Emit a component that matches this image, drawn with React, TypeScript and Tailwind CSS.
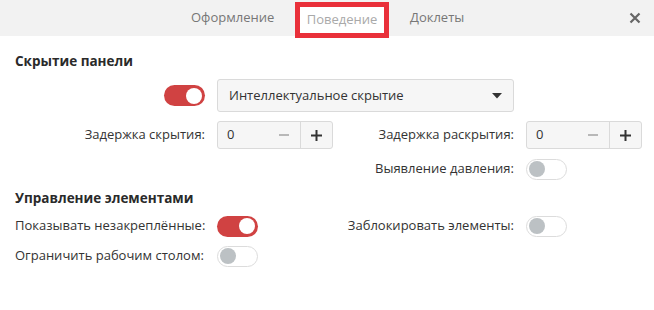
import React from "react";

const font = { fontFamily: '"Open Sans", "Noto Sans", sans-serif' };

function Toggle({ on }: { on: boolean }) {
  return on ? (
    <div className="w-[41px] h-[21px] rounded-full bg-[#d04242] flex items-center justify-end pr-[3px]">
      <div className="w-[16px] h-[16px] rounded-full bg-white" />
    </div>
  ) : (
    <div className="w-[41px] h-[21px] rounded-full bg-white border border-[#dcdcdc] flex items-center justify-start pl-[2px]">
      <div className="w-[16px] h-[16px] rounded-full bg-[#bcc1c4]" />
    </div>
  );
}

function Spin() {
  return (
    <div className="w-[116px] h-[28px] rounded-[3px] border border-[#dadada] bg-[#f6f6f6] flex items-stretch text-[13px] text-[#333]">
      <div className="flex-1 flex items-center pl-[9px]">0</div>
      <div className="w-[32px] flex items-center justify-center">
        <div className="w-[10px] h-[1.5px] bg-[#b8b8b8]" />
      </div>
      <div className="w-[32px] border-l border-[#dadada] flex items-center justify-center">
        <svg width="11" height="11" viewBox="0 0 11 11">
          <rect x="0" y="4.5" width="11" height="2" fill="#333" />
          <rect x="4.5" y="0" width="2" height="11" fill="#333" />
        </svg>
      </div>
    </div>
  );
}

export default function App() {
  return (
    <div className="w-[654px] h-[310px] bg-white text-[#333] overflow-hidden" style={font}>
      <div className="h-[36px] bg-[#f2f2f2] flex items-start relative text-[13px]">
        <div className="absolute left-[191px] top-0 h-[36px] flex items-center text-[#777]">Оформление</div>
        <div className="absolute left-[295px] top-[2px] w-[94px] h-[36px] border-[5px] border-[#e9303a] bg-white flex items-center justify-center text-[#a9a9a9] z-10">
          Поведение
        </div>
        <div className="absolute left-[410px] top-0 h-[36px] flex items-center text-[#777]">Доклеты</div>
        <div className="absolute left-[629px] top-[12px] w-[12px] h-[12px]">
          <svg width="12" height="12" viewBox="0 0 12 12">
            <path d="M1.5 1.5 L10.5 10.5 M10.5 1.5 L1.5 10.5" stroke="#666" strokeWidth="2.2" />
          </svg>
        </div>
      </div>

      <div className="pt-[15px] pl-[15px] text-[13px] whitespace-nowrap">
        <div className="h-[20px] leading-[20px] text-[13.5px] font-bold text-[#2a2a2a]">Скрытие панели</div>
        <div className="mt-[8px] grid grid-cols-[190px_116px_169px_116px] gap-x-[12px] grid-rows-[33px_28px_22px] gap-y-[9px] items-center">
          <div className="flex justify-end">
            <Toggle on />
          </div>
          <div className="col-span-2 h-[33px] rounded-[3px] border border-[#dadada] bg-[#f6f6f6] flex items-center justify-between pl-[11px] pr-[11px]">
            <span>Интеллектуальное скрытие</span>
            <svg width="10" height="6" viewBox="0 0 10 6">
              <path d="M0 0 L10 0 L5 5.5 Z" fill="#333" />
            </svg>
          </div>
          <div />
          <div className="text-right">Задержка скрытия:</div>
          <Spin />
          <div className="text-right">Задержка раскрытия:</div>
          <Spin />
          <div />
          <div />
          <div className="text-right">Выявление давления:</div>
          <Toggle on={false} />
        </div>
        <div className="mt-[8px] h-[20px] leading-[20px] text-[13.5px] font-bold text-[#2a2a2a]">Управление элементами</div>
        <div className="mt-[7px] grid grid-cols-[190px_116px_169px_116px] gap-x-[12px] grid-rows-[22px_22px] gap-y-[8px] items-center">
          <div>Показывать незакреплённые:</div>
          <Toggle on />
          <div className="text-right">Заблокировать элементы:</div>
          <Toggle on={false} />
          <div>Ограничить рабочим столом:</div>
          <Toggle on={false} />
          <div />
          <div />
        </div>
      </div>
    </div>
  );
}
